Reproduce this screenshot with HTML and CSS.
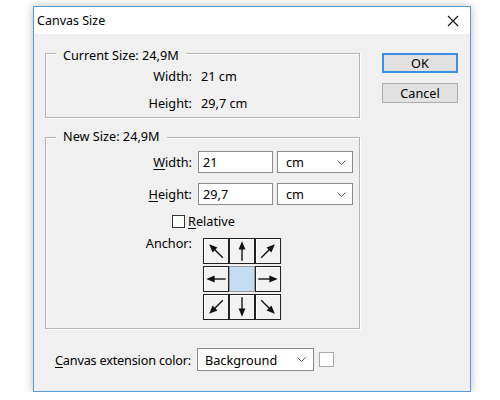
FILE: index.html
```html
<!DOCTYPE html>
<html>
<head>
<meta charset="utf-8">
<link rel="stylesheet" href="styles.css">
</head>
<body>
<svg width="0" height="0" class="defs">
  <defs>
    <g id="arr">
      <path d="M13 23.5 V10" stroke="#111" stroke-width="1.5" fill="none"/>
      <polygon points="13,2.5 9.3,11.5 16.7,11.5" fill="#111"/>
    </g>
  </defs>
</svg>
<div class="window">
  <div class="titlebar">
    <span class="title">Canvas Size</span>
    <svg class="close" width="12" height="12" viewBox="0 0 12 12"><path d="M1 1 L11 11 M11 1 L1 11" stroke="#111" stroke-width="1.1" fill="none"/></svg>
  </div>
  <div class="body">
    <div class="main">
      <div class="group g1">
        <div class="legend">Current Size: 24,9M</div>
        <div class="info">
          <span class="lbl">Width:</span><span class="val">21 cm</span>
          <span class="lbl">Height:</span><span class="val">29,7 cm</span>
        </div>
      </div>
      <div class="group g2">
        <div class="legend">New Size: 24,9M</div>
        <div class="frow r1">
          <span class="lbl"><u>W</u>idth:</span>
          <div class="input">21</div>
          <div class="select unit">cm<svg class="chev" width="9" height="5" viewBox="0 0 9 5"><path d="M0.5 0.5 L4.5 4.5 L8.5 0.5" stroke="#555" stroke-width="1" fill="none"/></svg></div>
        </div>
        <div class="frow r2">
          <span class="lbl"><u>H</u>eight:</span>
          <div class="input">29,7</div>
          <div class="select unit">cm<svg class="chev" width="9" height="5" viewBox="0 0 9 5"><path d="M0.5 0.5 L4.5 4.5 L8.5 0.5" stroke="#555" stroke-width="1" fill="none"/></svg></div>
        </div>
        <div class="check-row">
          <span class="checkbox"></span><span><u>R</u>elative</span>
        </div>
        <div class="anchor-row">
          <span class="lbl">Anchor:</span>
          <div class="anchor">
            <div class="cell"><svg width="24" height="24" viewBox="0 0 26 26"><use href="#arr" transform="rotate(-45 13 13)"/></svg></div>
            <div class="cell"><svg width="24" height="24" viewBox="0 0 26 26"><use href="#arr"/></svg></div>
            <div class="cell"><svg width="24" height="24" viewBox="0 0 26 26"><use href="#arr" transform="rotate(45 13 13)"/></svg></div>
            <div class="cell"><svg width="24" height="24" viewBox="0 0 26 26"><use href="#arr" transform="rotate(-90 13 13)"/></svg></div>
            <div class="cell center"></div>
            <div class="cell"><svg width="24" height="24" viewBox="0 0 26 26"><use href="#arr" transform="rotate(90 13 13)"/></svg></div>
            <div class="cell"><svg width="24" height="24" viewBox="0 0 26 26"><use href="#arr" transform="rotate(-135 13 13)"/></svg></div>
            <div class="cell"><svg width="24" height="24" viewBox="0 0 26 26"><use href="#arr" transform="rotate(180 13 13)"/></svg></div>
            <div class="cell"><svg width="24" height="24" viewBox="0 0 26 26"><use href="#arr" transform="rotate(135 13 13)"/></svg></div>
          </div>
        </div>
      </div>
      <div class="ext-row">
        <span class="ext-lbl"><u>C</u>anvas extension color:</span>
        <div class="select wide">Background<svg class="chev" width="9" height="5" viewBox="0 0 9 5"><path d="M0.5 0.5 L4.5 4.5 L8.5 0.5" stroke="#555" stroke-width="1" fill="none"/></svg></div>
        <span class="swatch"></span>
      </div>
    </div>
    <div class="buttons">
      <div class="btn ok">OK</div>
      <div class="btn">Cancel</div>
    </div>
  </div>
</div>
</body>
</html>
```
FILE: styles.css
```css
* { box-sizing: border-box; }
html, body { margin: 0; padding: 0; background: #fff; }
body {
  font-family: "Noto Sans", "Open Sans", sans-serif;
  font-size: 12.7px;
  line-height: 16px;
  color: #000;
}
.defs { position: absolute; }
u { text-decoration: underline; text-underline-offset: 2px; }

.window {
  margin: 6px 0 0 33px;
  width: 438px;
  height: 386px;
  border: 1px solid #5a9ad6;
  background: #f0f0f0;
  box-shadow: 0 0 9px rgba(0,0,0,0.28);
  display: flex;
  flex-direction: column;
}
.titlebar {
  height: 27px;
  background: #fff;
  display: flex;
  align-items: center;
  justify-content: space-between;
  padding: 0 11px 0 3px;
}
.title { font-size: 12.5px; }
.close { display: block; }

.body {
  flex: 1;
  display: flex;
  padding: 19px 12px 0 11px;
  gap: 22px;
}
.main { width: 315px; }

.group {
  border: 1px solid #b4b4b4;
  box-shadow: 1px 1px 0 #fff, inset 1px 1px 0 #fff;
}
.legend {
  width: fit-content;
  margin-left: 10px;
  padding: 0 7px;
  background: #f0f0f0;
  line-height: 16px;
}
.g1 { height: 65px; }
.g1 .legend { margin-top: -7px; }
.info {
  margin-top: 5px;
  display: grid;
  grid-template-columns: 146px auto;
  column-gap: 9px;
  row-gap: 11px;
}
.lbl { text-align: right; white-space: nowrap; }

.g2 { height: 192px; margin-top: 19px; }
.g2 .legend { margin-top: -10px; }
.frow {
  display: flex;
  align-items: center;
  height: 22px;
}
.frow .lbl { width: 146px; margin-right: 6px; }
.r1 { margin-top: 7px; }
.r2 { margin-top: 10px; }
.input {
  width: 75px;
  height: 22px;
  border: 1px solid #8a8a8a;
  background: #fff;
  padding: 2px 0 0 4px;
}
.select {
  height: 22px;
  border: 1px solid #8a8a8a;
  background: #fff;
  display: flex;
  align-items: center;
  justify-content: space-between;
  padding: 0 6px 0 8px;
}
.unit { width: 76px; margin-left: 4px; }
.chev { display: block; }

.check-row {
  display: flex;
  align-items: center;
  margin-top: 8px;
  padding-left: 126px;
  height: 16px;
}
.checkbox {
  width: 13px;
  height: 13px;
  border: 1px solid #333;
  background: #fff;
  margin-right: 3px;
}
.anchor-row {
  display: flex;
  align-items: flex-start;
  margin-top: 6px;
}
.anchor-row .lbl { width: 146px; margin-right: 11px; }
.anchor {
  margin-top: 3px;
  display: grid;
  grid-template-columns: repeat(3, 26px);
  grid-auto-rows: 26px;
  row-gap: 2px;
}
.cell {
  border: 1px solid #222;
  background: #f2f2f2;
  box-shadow: inset 1px 1px 0 #fff;
  display: flex;
  align-items: center;
  justify-content: center;
}
.cell svg { display: block; }
.cell.center {
  background: #c4ddf3;
  border-color: #9a9a9a;
  box-shadow: none;
}

.ext-row {
  display: flex;
  align-items: center;
  margin-top: 19px;
  height: 23px;
}
.ext-lbl { flex: 0 0 152px; min-width: 0; padding-left: 10px; white-space: nowrap; letter-spacing: -0.2px; }
.wide { width: 117px; height: 23px; padding: 0 7px 0 7px; }
.swatch {
  width: 15px;
  height: 15px;
  border: 1px solid #a8a8a8;
  background: #fff;
  margin-left: 5px;
}

.buttons {
  width: 76px;
  display: flex;
  flex-direction: column;
  gap: 10px;
}
.btn {
  height: 20px;
  border: 1px solid #adadad;
  background: #e1e1e1;
  display: flex;
  align-items: center;
  justify-content: center;
}
.btn.ok {
  border: 2px solid #3d8ee0;
}
```
